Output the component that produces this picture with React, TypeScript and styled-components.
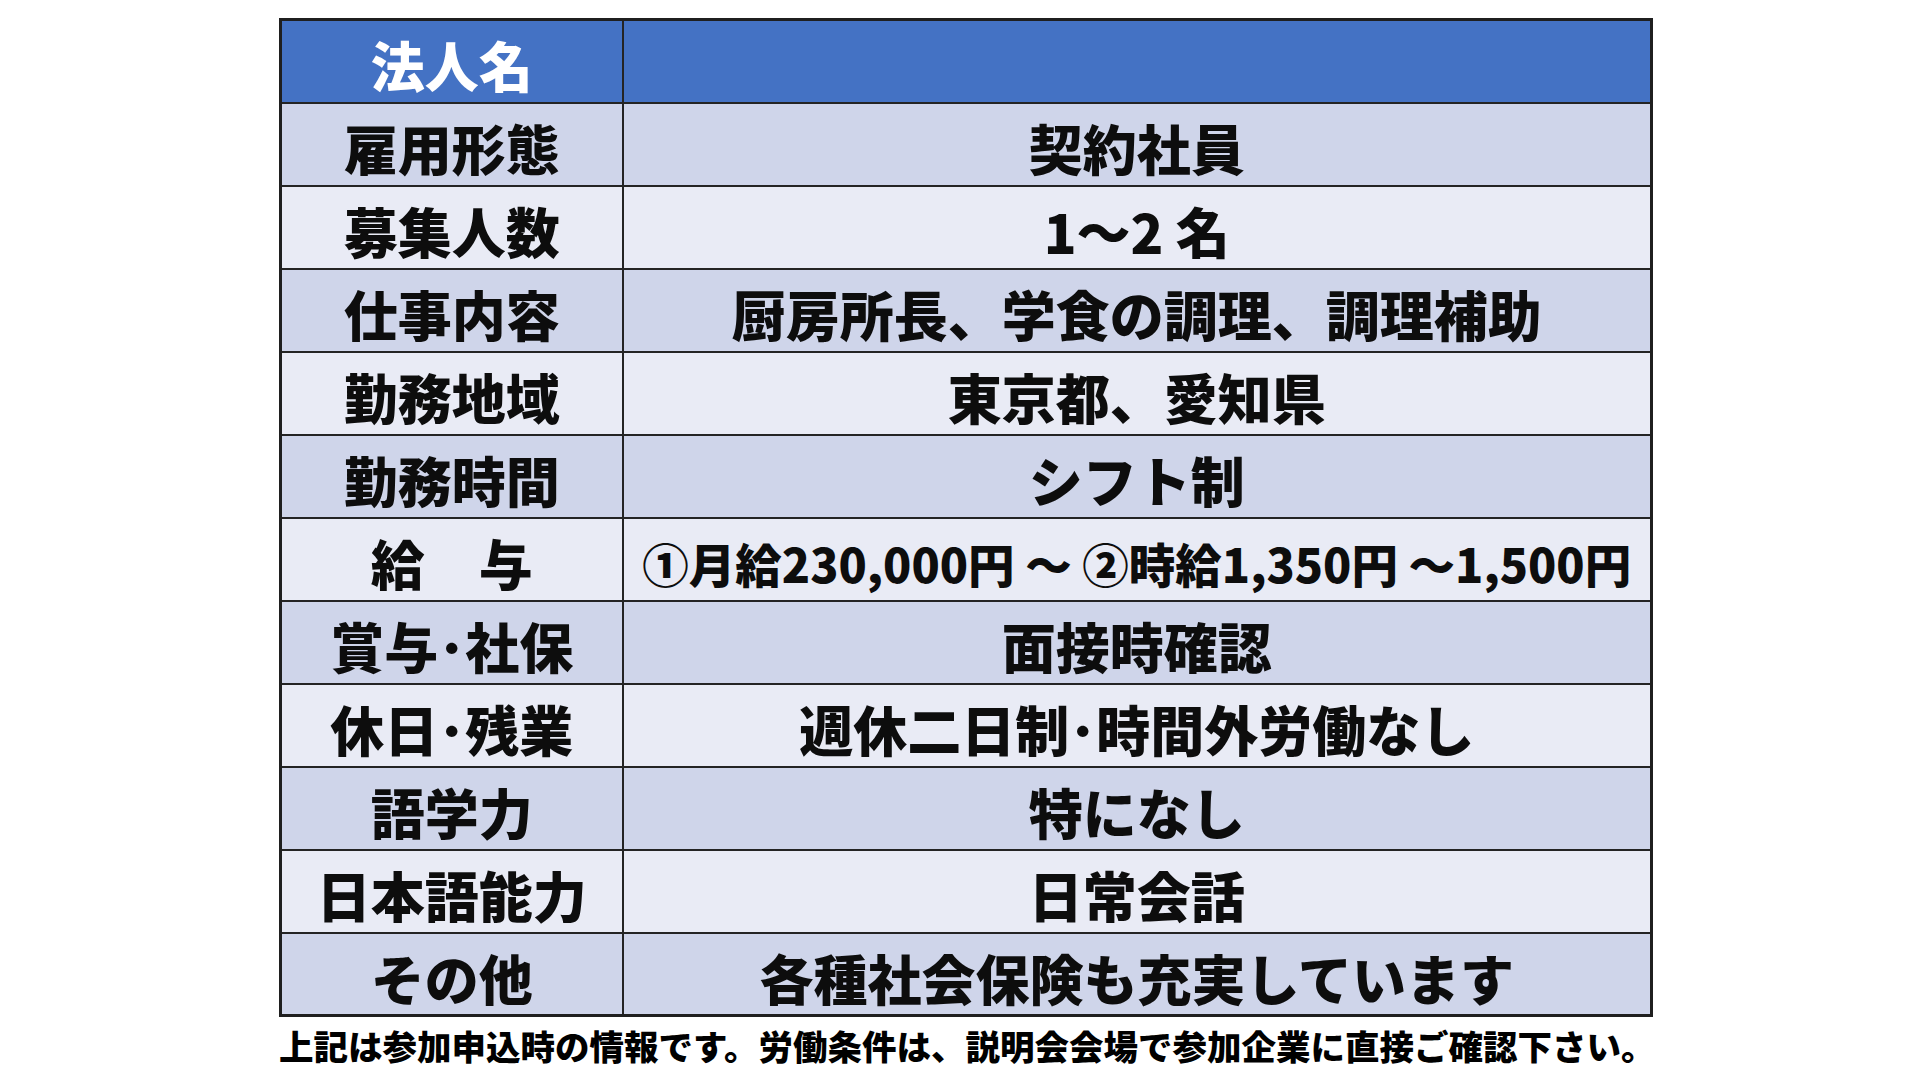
import styled, { createGlobalStyle } from 'styled-components';

const ROWS: { label: string; value: string; small?: boolean }[] = [
  { label: '雇用形態', value: '契約社員' },
  { label: '募集人数', value: '1～2 名' },
  { label: '仕事内容', value: '厨房所長、学食の調理、調理補助' },
  { label: '勤務地域', value: '東京都、愛知県' },
  { label: '勤務時間', value: 'シフト制' },
  { label: '給　与', value: '①月給230,000円 ～ ②時給1,350円 ～1,500円', small: true },
  { label: '賞与･社保', value: '面接時確認' },
  { label: '休日･残業', value: '週休二日制･時間外労働なし' },
  { label: '語学力', value: '特になし' },
  { label: '日本語能力', value: '日常会話' },
  { label: 'その他', value: '各種社会保険も充実しています' },
];

const App = () => {
  return (
    <Page>
      <GlobalStyle />
      <Sheet>
        <Table>
          <colgroup>
            <col style={{ width: 342 }} />
            <col />
          </colgroup>
          <tbody>
            <HeadRow>
              <Cell>法人名</Cell>
              <Cell />
            </HeadRow>
            {ROWS.map((row, idx) => (
              <BodyRow key={row.label} $dark={idx % 2 === 0}>
                <Cell>{row.label}</Cell>
                <Cell $small={row.small}>{row.value}</Cell>
              </BodyRow>
            ))}
          </tbody>
        </Table>
        <Note>上記は参加申込時の情報です。労働条件は、説明会会場で参加企業に直接ご確認下さい。</Note>
      </Sheet>
    </Page>
  );
};

export default App;

const GlobalStyle = createGlobalStyle`
  html, body {
    margin: 0;
    padding: 0;
    background: #ffffff;
  }
`;

const Page = styled.div`
  width: 1920px;
  height: 1080px;
  overflow: hidden;
  background: #ffffff;
  font-family: 'Noto Sans CJK JP', 'Noto Sans', sans-serif;
`;

const Sheet = styled.div`
  display: flex;
  flex-direction: column;
  width: 1374px;
  padding: 18px 0 0 279px;
`;

const Table = styled.table`
  width: 1374px;
  height: 997px;
  border-collapse: collapse;
  table-layout: fixed;
  border: 3px solid #1f1f1f;
`;

const HeadRow = styled.tr`
  height: 83px;
  background: #4472c4;
  color: #ffffff;
`;

const BodyRow = styled.tr<{ $dark: boolean }>`
  height: 83px;
  background: ${({ $dark }) => ($dark ? '#cfd5ea' : '#e9ebf5')};
  color: #0d0d0d;
`;

const Cell = styled.td<{ $small?: boolean }>`
  padding: 8px 0 0 0;
  border: 2px solid #242424;
  text-align: center;
  vertical-align: middle;
  white-space: nowrap;
  font-size: ${({ $small }) => ($small ? '46.5px' : '54px')};
  font-weight: 900;
  line-height: 1;
`;

const Note = styled.div`
  margin-top: 8px;
  color: #000000;
  font-size: 34.5px;
  font-weight: 900;
  line-height: 1.2;
  white-space: nowrap;
`;
